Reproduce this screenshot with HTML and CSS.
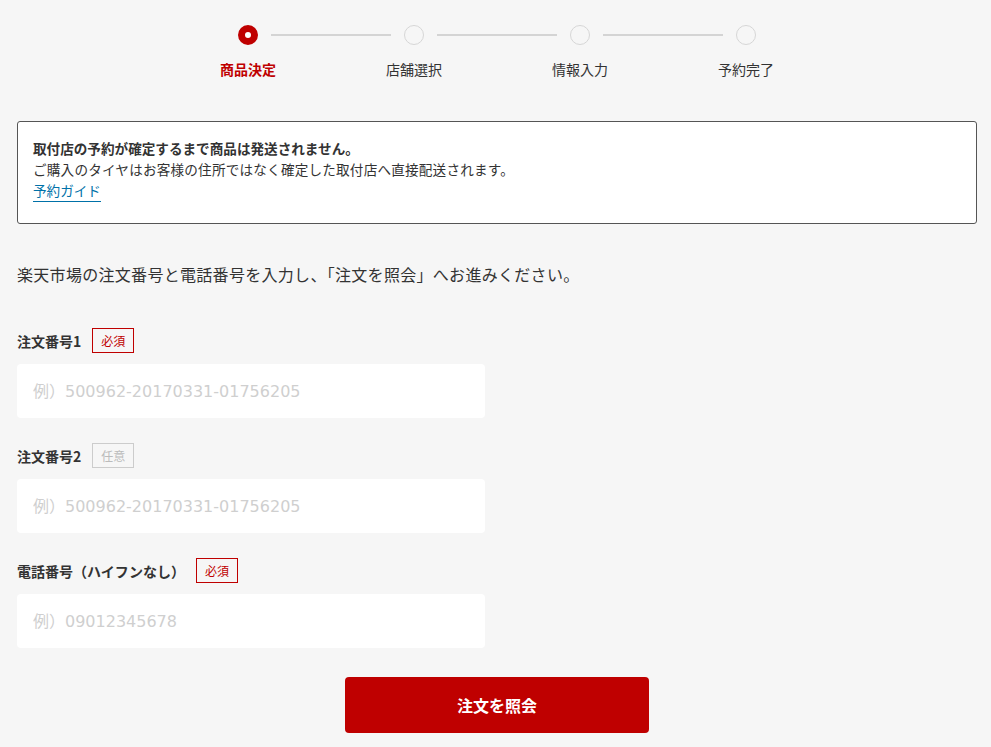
FILE: index.html
```html
<!DOCTYPE html>
<html lang="ja">
<head>
<meta charset="utf-8">
<title>注文照会</title>
<link rel="stylesheet" href="styles.css">
</head>
<body>
<div class="page">
  <ol class="steps">
    <li class="step active"><span class="dot"></span><span class="step-label">商品決定</span></li>
    <li class="step"><span class="dot"></span><span class="step-label">店舗選択</span></li>
    <li class="step"><span class="dot"></span><span class="step-label">情報入力</span></li>
    <li class="step last"><span class="dot"></span><span class="step-label">予約完了</span></li>
  </ol>

  <div class="notice">
    <p class="notice-title">取付店の予約が確定するまで商品は発送されません。</p>
    <p class="notice-text">ご購入のタイヤはお客様の住所ではなく確定した取付店へ直接配送されます。</p>
    <a class="notice-link" href="#">予約ガイド</a>
  </div>

  <p class="lead">楽天市場の注文番号と電話番号を入力し、「注文を照会」へお進みください。</p>

  <form class="form">
    <div class="field">
      <div class="field-head"><label class="field-label">注文番号1</label><span class="badge req">必須</span></div>
      <input class="input" type="text" placeholder="例）500962-20170331-01756205">
    </div>
    <div class="field">
      <div class="field-head"><label class="field-label">注文番号2</label><span class="badge opt">任意</span></div>
      <input class="input" type="text" placeholder="例）500962-20170331-01756205">
    </div>
    <div class="field">
      <div class="field-head"><label class="field-label">電話番号（ハイフンなし）</label><span class="badge req">必須</span></div>
      <input class="input" type="text" placeholder="例）09012345678">
    </div>
    <div class="actions">
      <button class="submit" type="button">注文を照会</button>
    </div>
  </form>
</div>
</body>
</html>
```
FILE: styles.css
```css
html, body {
  margin: 0;
  padding: 0;
  background: #f6f6f6;
}
body {
  font-family: "Noto Sans CJK JP", "Noto Sans", sans-serif;
  color: #333;
  font-size: 14px;
}
.page {
  width: 960px;
  margin-left: 17px;
  padding-top: 25px;
}
.steps {
  list-style: none;
  margin: 0 auto;
  padding: 0;
  display: flex;
  justify-content: center;
}
.step {
  width: 166px;
  display: flex;
  flex-direction: column;
  align-items: center;
  position: relative;
}
.step::after {
  content: "";
  position: absolute;
  top: 9px;
  left: calc(50% + 23px);
  width: 120px;
  height: 2px;
  background: #d4d4d4;
}
.step.last::after { display: none; }
.dot {
  width: 20px;
  height: 20px;
  box-sizing: border-box;
  border-radius: 50%;
  border: 1.5px solid #d6d6d6;
  background: #f6f6f6;
}
.step.active .dot {
  border: 7px solid #bf0000;
  background: #fff;
}
.step-label {
  margin-top: 14px;
  font-size: 14px;
  line-height: 20px;
  color: #333;
}
.step.active .step-label {
  color: #bf0000;
  font-weight: bold;
}
.notice {
  margin-top: 42px;
  background: #fff;
  border: 1px solid #555;
  border-radius: 3px;
  padding: 16px 15px 21px;
  font-size: 13.6px;
  line-height: 21px;
}
.notice p { margin: 0; }
.notice-title { font-weight: bold; }
.notice-text { letter-spacing: 0.2px; }
.notice-link {
  display: inline-block;
  color: #0071a8;
  text-decoration: none;
  border-bottom: 1px solid #0071a8;
  line-height: 21px;
}
.lead {
  margin: 38px 0 0;
  font-size: 16px;
  line-height: 24px;
  letter-spacing: 0.3px;
}
.form {
  margin-top: 42px;
}
.field {
  margin-bottom: 25px;
}
.field-head {
  display: flex;
  align-items: center;
  height: 25px;
}
.field-label {
  font-weight: bold;
  font-size: 14px;
}
.badge {
  margin-left: 11px;
  width: 42px;
  height: 25px;
  box-sizing: border-box;
  display: flex;
  align-items: center;
  justify-content: center;
  font-size: 12px;
}
.badge.req {
  border: 1px solid #bf0000;
  color: #bf0000;
}
.badge.opt {
  border: 1px solid #ccc;
  color: #bbb;
}
.input {
  display: block;
  margin-top: 11px;
  width: 468px;
  height: 54px;
  box-sizing: border-box;
  border: none;
  border-radius: 4px;
  background: #fff;
  padding: 0 16px;
  font-family: "DejaVu Sans", "Noto Sans CJK JP", sans-serif;
  font-size: 16px;
  color: #333;
  outline: none;
}
.input::placeholder { color: #cfcfcf; }
.actions {
  display: flex;
  justify-content: center;
  margin-top: 29px;
}
.submit {
  width: 304px;
  height: 56px;
  border: none;
  border-radius: 4px;
  background: #bf0000;
  color: #fff;
  font-family: "Noto Sans CJK JP", "Noto Sans", sans-serif;
  font-weight: bold;
  font-size: 16px;
  cursor: pointer;
}
```
